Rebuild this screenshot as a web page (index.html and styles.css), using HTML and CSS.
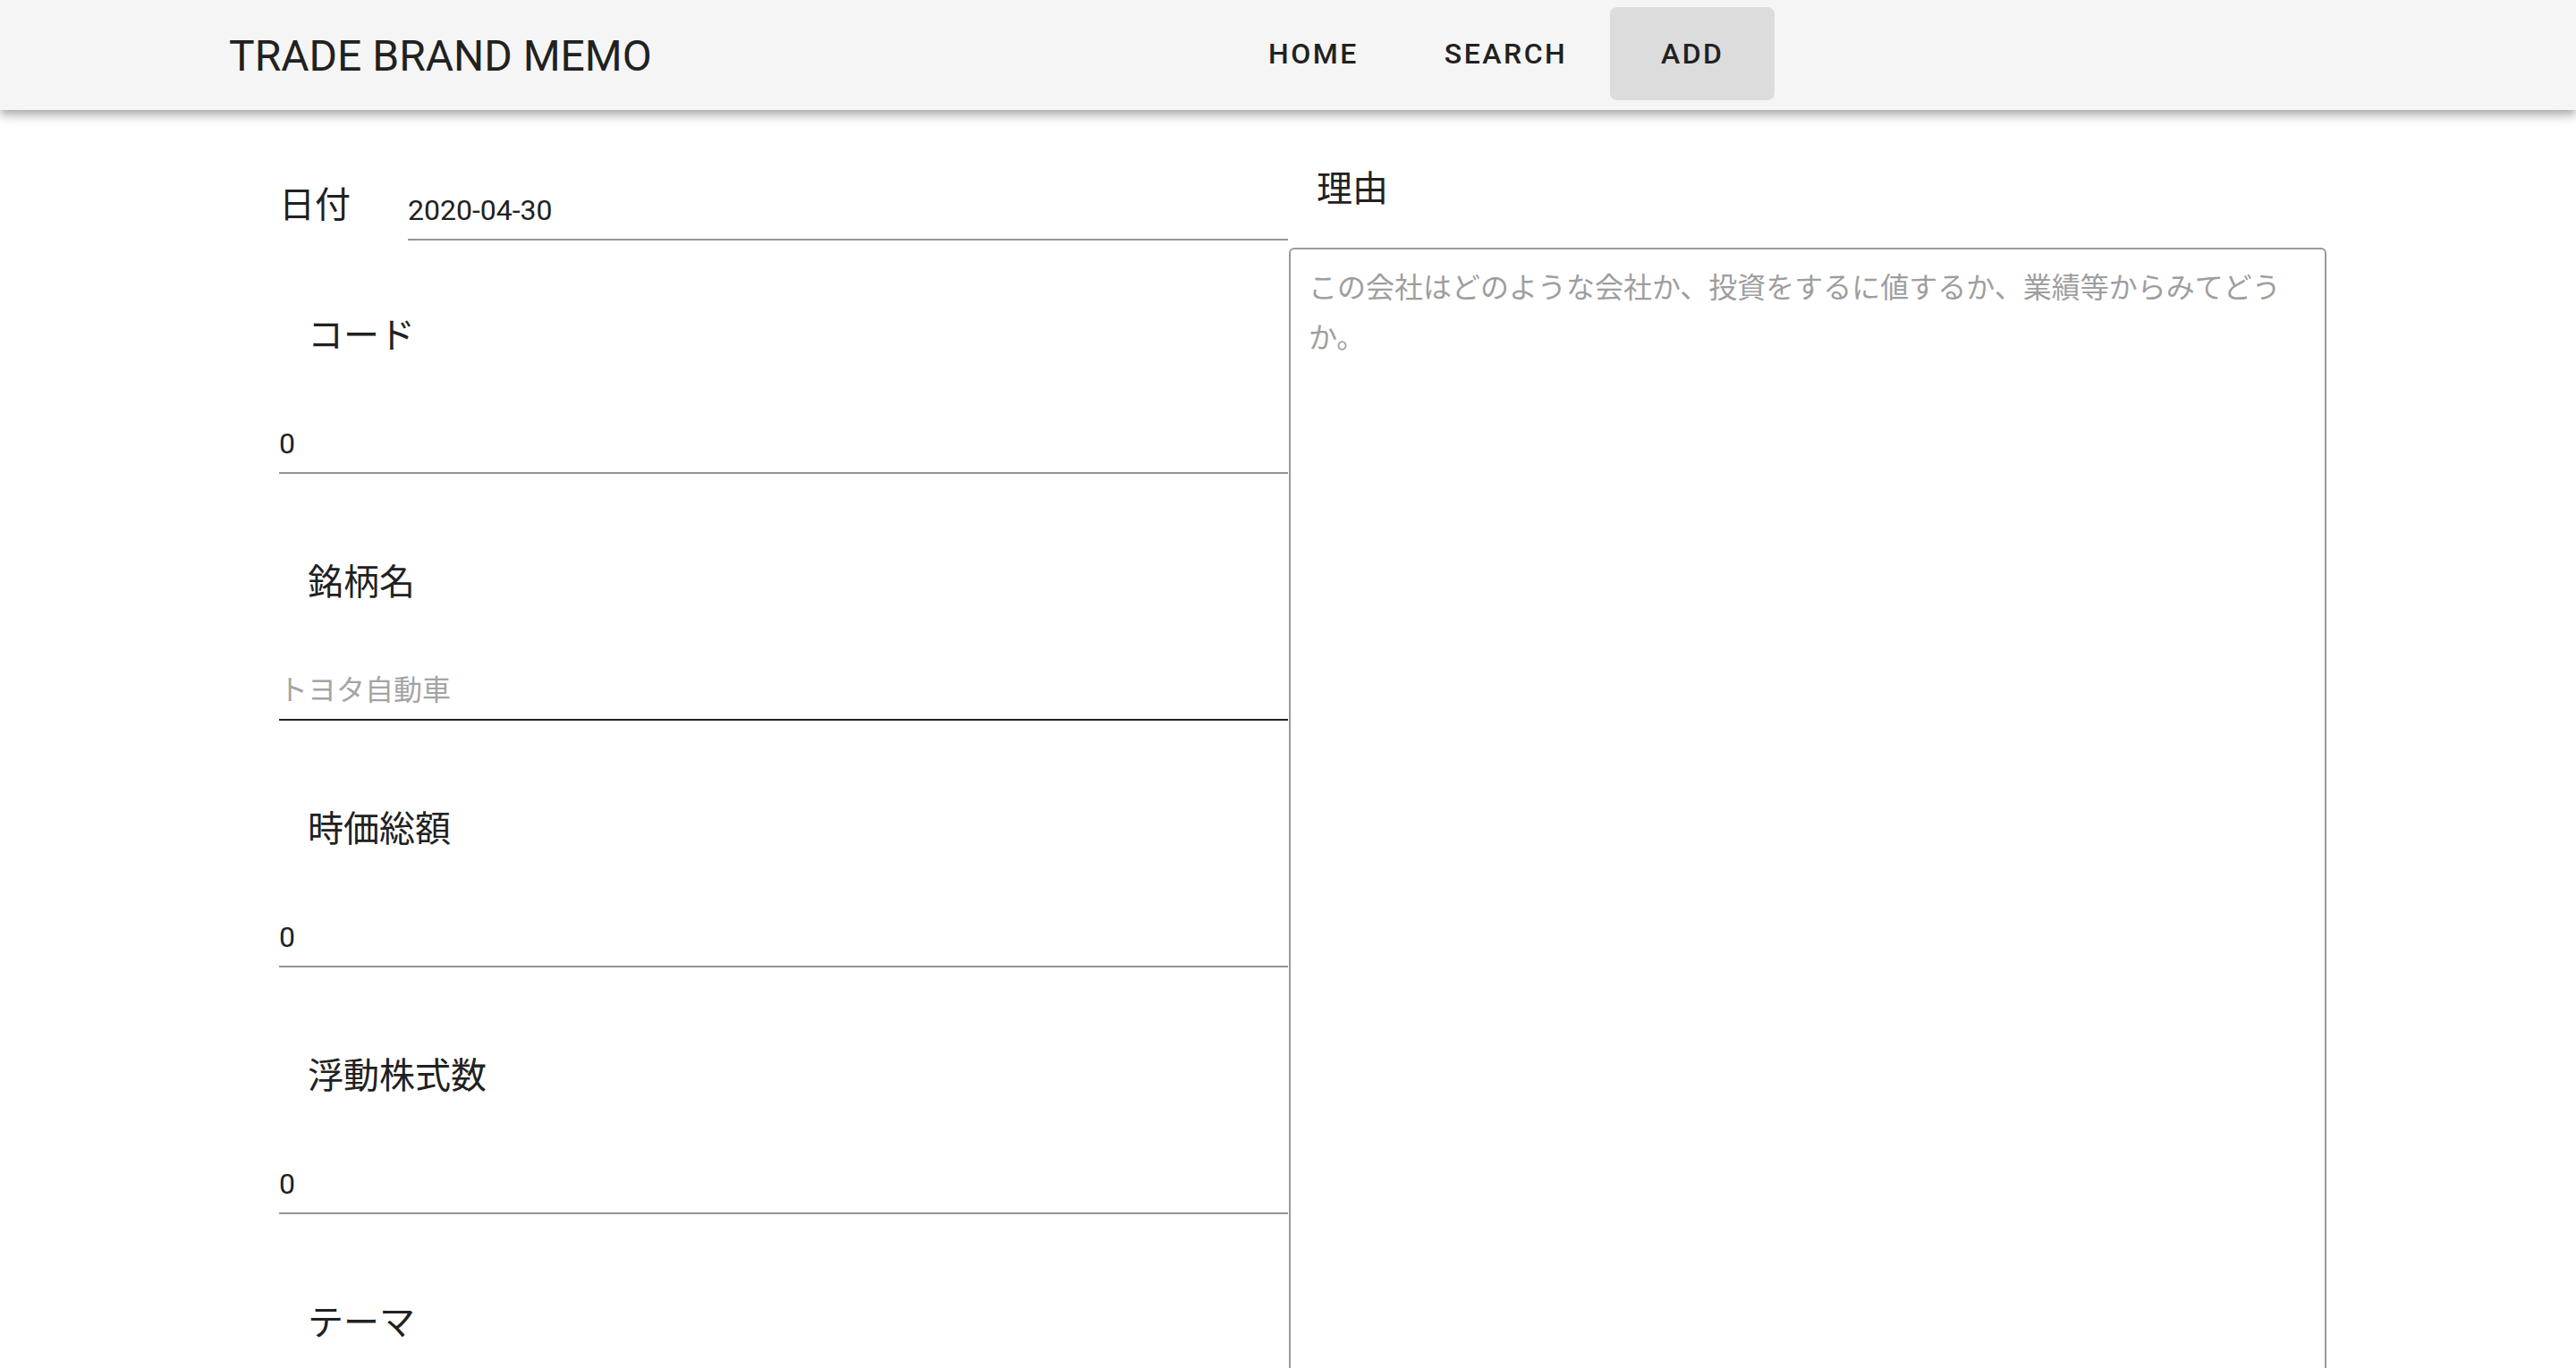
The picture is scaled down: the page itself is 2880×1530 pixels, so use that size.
FILE: index.html
```html
<!DOCTYPE html>
<html lang="ja">
<head>
<meta charset="utf-8">
<title>TRADE BRAND MEMO</title>
<link rel="stylesheet" href="styles.css">
</head>
<body>
<header class="appbar">
  <div class="brand">TRADE BRAND MEMO</div>
  <nav class="nav">
    <a class="nav-btn">HOME</a>
    <a class="nav-btn">SEARCH</a>
    <a class="nav-btn nav-btn-active">ADD</a>
  </nav>
</header>
<main class="page">
  <section class="left">
    <div class="date-row">
      <label class="date-label">日付</label>
      <div class="date-input"><input class="field-input" type="text" value="2020-04-30"></div>
    </div>
    <div class="field">
      <div class="field-label">コード</div>
      <input class="field-input" type="text" value="0">
    </div>
    <div class="field">
      <div class="field-label">銘柄名</div>
      <input class="field-input field-input-hover" type="text" placeholder="トヨタ自動車">
    </div>
    <div class="field">
      <div class="field-label">時価総額</div>
      <input class="field-input" type="text" value="0">
    </div>
    <div class="field">
      <div class="field-label">浮動株式数</div>
      <input class="field-input" type="text" value="0">
    </div>
    <div class="field">
      <div class="field-label">テーマ</div>
      <input class="field-input" type="text" value="">
    </div>
  </section>
  <section class="right">
    <div class="reason-label">理由</div>
    <textarea class="reason" placeholder="この会社はどのような会社か、投資をするに値するか、業績等からみてどうか。"></textarea>
  </section>
</main>
</body>
</html>
```

FILE: styles.css
```css
html, body {
  margin: 0;
  padding: 0;
  background: #ffffff;
  overflow: hidden;
}

body {
  font-family: "Roboto", "Noto Sans CJK JP", sans-serif;
  color: #212121;
}

.appbar {
  position: relative;
  z-index: 2;
  height: 123px;
  box-sizing: border-box;
  display: flex;
  align-items: center;
  padding-left: 256px;
  background: #f5f5f5;
  box-shadow: 0 4px 8px -2px rgba(0, 0, 0, 0.2), 0 8px 10px 0 rgba(0, 0, 0, 0.14), 0 2px 20px 0 rgba(0, 0, 0, 0.12);
}

.brand {
  flex: 0 0 1114px;
  font-family: "Roboto", sans-serif;
  font-size: 48px;
  font-weight: 400;
  color: #212121;
  margin-top: 2px;
  white-space: nowrap;
}

.nav {
  display: flex;
  align-self: flex-start;
  margin-top: 8px;
}

.nav-btn {
  height: 104px;
  box-sizing: border-box;
  padding: 0 48px;
  display: flex;
  align-items: center;
  justify-content: center;
  font-family: "Roboto", sans-serif;
  font-weight: 500;
  font-size: 32px;
  letter-spacing: 2.5px;
  color: #212121;
  border-radius: 8px;
}

.nav-btn-active {
  min-width: 184px;
  padding-left: 0;
  padding-right: 0;
  background: #dcdcdc;
}

.page {
  display: flex;
  align-items: flex-start;
  padding-top: 56px;
  padding-left: 312px;
}

.left {
  flex: 0 0 1128px;
  padding-top: 18px;
}

.date-row {
  display: flex;
  align-items: flex-start;
  margin-bottom: 74px;
}

.date-label {
  flex: 0 0 auto;
  width: 144px;
  font-family: "Noto Sans CJK JP", sans-serif;
  font-size: 40px;
  line-height: 58px;
  color: #212121;
}

.date-input {
  flex: 1 1 auto;
  margin-top: 6px;
}

.field {
  margin-bottom: 89px;
}

.field-label {
  padding-left: 32px;
  font-family: "Noto Sans CJK JP", sans-serif;
  font-size: 40px;
  line-height: 58px;
  color: #212121;
  margin-bottom: 63px;
}

.field-input {
  display: block;
  width: 100%;
  height: 66px;
  box-sizing: border-box;
  margin: 0;
  padding: 12px 0 12px;
  border: none;
  border-bottom: 2px solid #949494;
  outline: none;
  background: transparent;
  font-family: "Roboto", "Noto Sans CJK JP", sans-serif;
  font-size: 32px;
  color: #212121;
}

.field-input-hover {
  border-bottom-color: #212121;
}

.field-input::placeholder {
  color: #a4a4a4;
  opacity: 1;
}

.right {
  flex: 0 0 1160px;
  margin-left: 1px;
  display: flex;
  flex-direction: column;
}

.reason-label {
  padding-left: 31px;
  font-family: "Noto Sans CJK JP", sans-serif;
  font-size: 40px;
  line-height: 58px;
  color: #212121;
  margin-bottom: 40px;
}

.reason {
  display: block;
  width: 1160px;
  height: 1500px;
  box-sizing: border-box;
  margin: 0;
  padding: 12px 20px;
  border: 2px solid #9a9a9a;
  border-radius: 6px;
  resize: none;
  outline: none;
  font-family: "Noto Sans CJK JP", sans-serif;
  font-size: 32px;
  line-height: 56px;
  color: #212121;
  background: #ffffff;
}

.reason::placeholder {
  color: #9e9e9e;
  opacity: 1;
}
```
